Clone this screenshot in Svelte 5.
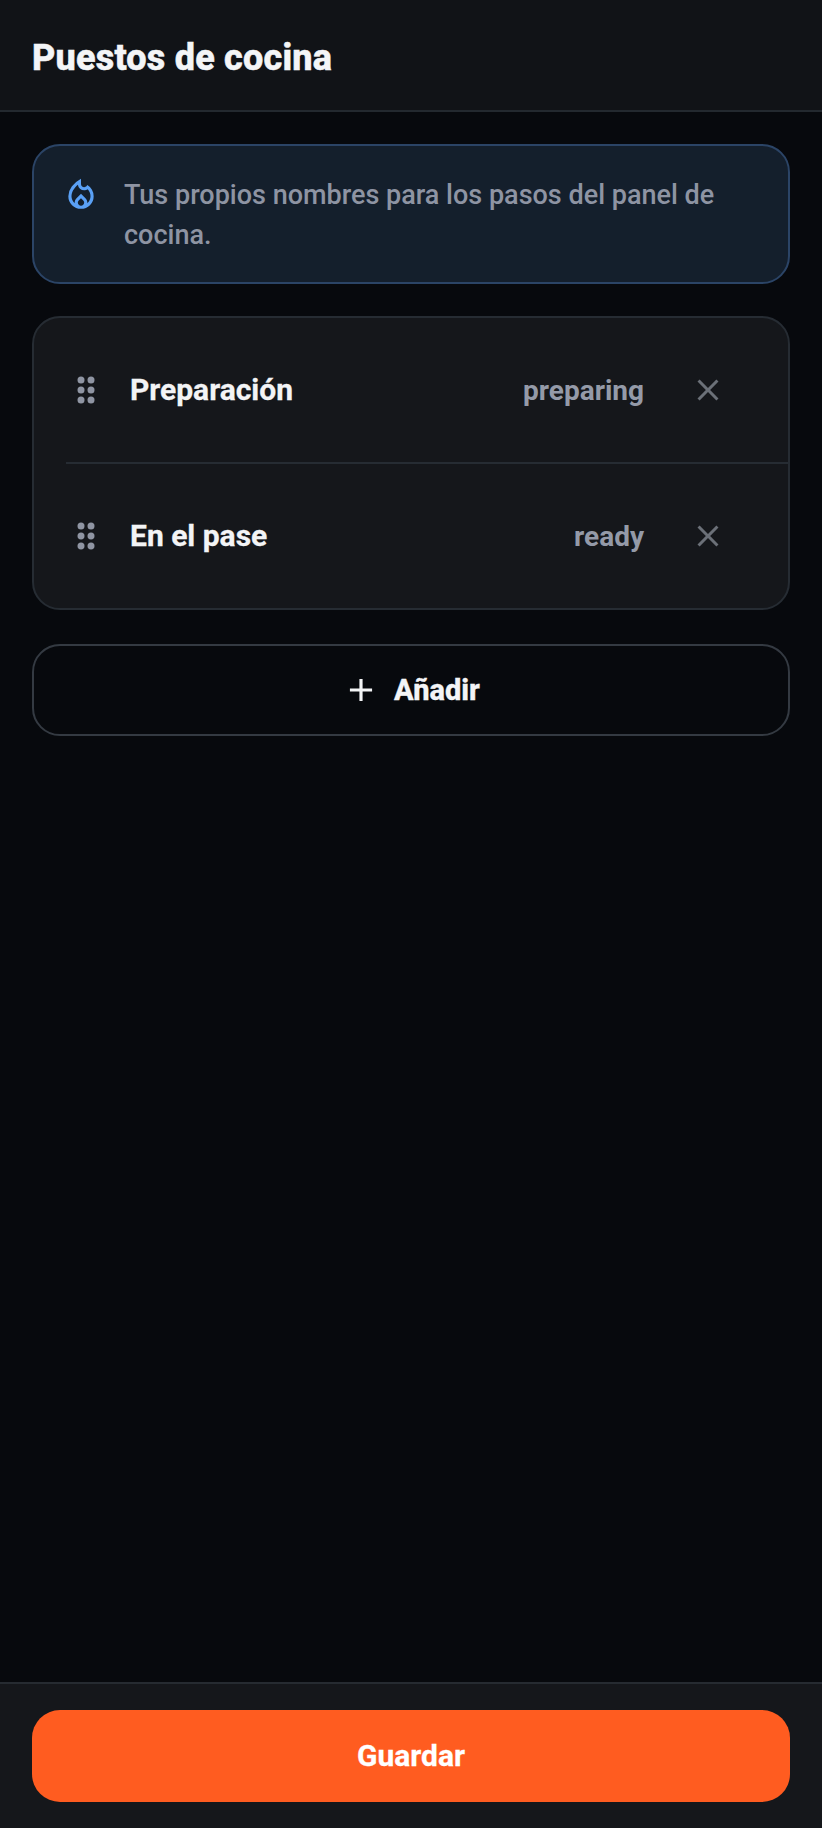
<script lang="ts">
const stations = [
  { id: 1, name: "Preparación", status: "preparing" },
  { id: 2, name: "En el pase", status: "ready" },
];
</script>

<div class="screen">
  <header class="topbar">
    <h1>Puestos de cocina</h1>
  </header>

  <main class="content">
    <div class="info">
      <svg class="flame" viewBox="0 -960 960 960" aria-hidden="true">
        <path d="M240-400q0 52 21 98.500t60 81.500q-1-5-1-9v-9q0-32 12-60t35-51l113-111 113 111q23 23 35 51t12 60v9q0 4-1 9 39-35 60-81.500t21-98.500q0-50-18.500-94.500T648-574q-20 13-42 19.500t-45 6.500q-62 0-107.500-41T401-690q-39 33-69 68.500t-50.500 72Q261-513 250.500-475.500T240-400Zm240 52-57 56q-11 11-17 25t-6 29q0 32 23.500 55t56.500 23q33 0 56.500-23t23.500-55q0-16-6-29.500T537-292l-57-56Zm0-492v132q0 34 23.500 57t57.500 23q18 0 33.500-7.500T622-658l18-22q74 42 117 117t43 163q0 134-93 227T480-80q-134 0-227-93t-93-227q0-129 86.500-245T480-840Z" />
      </svg>
      <p>Tus propios nombres para los pasos del panel de cocina.</p>
    </div>

    <ul class="list">
      {#each stations as s (s.id)}
        <li class="row">
          <svg class="grip" viewBox="0 0 24 24" aria-hidden="true">
            <circle cx="9" cy="6" r="2.100" /><circle cx="15" cy="6" r="2.100" />
            <circle cx="9" cy="12" r="2.100" /><circle cx="15" cy="12" r="2.100" />
            <circle cx="9" cy="18" r="2.100" /><circle cx="15" cy="18" r="2.100" />
          </svg>
          <span class="name">{s.name}</span>
          <span class="status">{s.status}</span>
          <button class="remove" type="button" aria-label="Quitar">
            <svg viewBox="0 0 24 24" aria-hidden="true">
              <path d="M19 6.410L17.590 5 12 10.590 6.410 5 5 6.410 10.590 12 5 17.590 6.410 19 12 13.410 17.590 19 19 17.590 13.410 12z" />
            </svg>
          </button>
        </li>
      {/each}
    </ul>

    <button class="add" type="button">
      <svg viewBox="0 0 24 24" aria-hidden="true">
        <path d="M19 13h-6v6h-2v-6H5v-2h6V5h2v6h6z" />
      </svg>
      <span>Añadir</span>
    </button>
  </main>

  <footer class="footer">
    <button class="save" type="button">Guardar</button>
  </footer>
</div>

<style>
  :global(body) {
    background: #07090d;
  }
  .screen {
    display: flex;
    flex-direction: column;
    height: 100vh;
    font-family: Roboto, "Liberation Sans", sans-serif;
    background: #07090d;
  }
  .topbar {
    display: flex;
    align-items: center;
    box-sizing: border-box;
    height: 112px;
    padding: 6px 32px 0;
    background: #111317;
    border-bottom: 2px solid #23292f;
  }
  h1 {
    margin: 0;
    font-size: 36px;
    font-weight: 800;
    letter-spacing: 0.2px;
    -webkit-text-stroke: 0.5px #f4f5f7;
    color: #f4f5f7;
  }
  .content {
    flex: 1;
    display: flex;
    flex-direction: column;
    padding: 32px;
  }
  .info {
    display: flex;
    gap: 24px;
    padding: 29px 28px 27px;
    border: 2px solid #2b4466;
    border-radius: 28px;
    background: #141f2c;
  }
  .flame {
    flex: none;
    width: 38px;
    height: 38px;
    margin-top: -1px;
    fill: #5aa0f5;
  }
  .info p {
    margin: 0;
    font-size: 27px;
    line-height: 40px;
    font-weight: 500;
    color: #8e94a3;
  }
  .list {
    list-style: none;
    margin: 32px 0 34px;
    padding: 0;
    border: 2px solid #262c33;
    border-radius: 28px;
    background: #15171b;
    overflow: hidden;
  }
  .row {
    display: flex;
    align-items: center;
    height: 144px;
    margin-left: 32px;
    padding-right: 62px;
  }
  .row + .row {
    border-top: 2px solid #262c33;
  }
  .grip {
    flex: none;
    width: 40px;
    height: 40px;
    fill: #8f95a3;
  }
  .name {
    flex: 1;
    margin-left: 24px;
    padding-bottom: 2px;
    font-size: 30px;
    font-weight: 700;
    -webkit-text-stroke: 0.3px #f3f4f6;
    color: #f3f4f6;
  }
  .status {
    font-size: 28px;
    font-weight: 700;
    color: #949aa8;
  }
  .remove {
    display: flex;
    margin-left: 46px;
    padding: 0;
    border: 0;
    background: none;
  }
  .remove svg {
    width: 36px;
    height: 36px;
    fill: #6b7078;
  }
  .add {
    display: flex;
    align-items: center;
    justify-content: center;
    gap: 14px;
    height: 92px;
    padding: 0;
    border: 2px solid #343a42;
    border-radius: 28px;
    background: transparent;
    color: #f3f4f6;
    font-family: inherit;
    font-size: 29px;
    font-weight: 800;
    -webkit-text-stroke: 0.3px #f3f4f6;
  }
  .add svg {
    width: 38px;
    height: 38px;
    fill: #f3f4f6;
  }
  .footer {
    padding: 26px 32px;
    background: #15171b;
    border-top: 2px solid #262b31;
  }
  .save {
    display: block;
    width: 100%;
    height: 92px;
    padding: 0 0 2px;
    border: 0;
    border-radius: 28px;
    background: #ff5c20;
    color: #fff;
    font-family: inherit;
    font-size: 30px;
    font-weight: 700;
    -webkit-text-stroke: 0.3px #fff;
  }
</style>
